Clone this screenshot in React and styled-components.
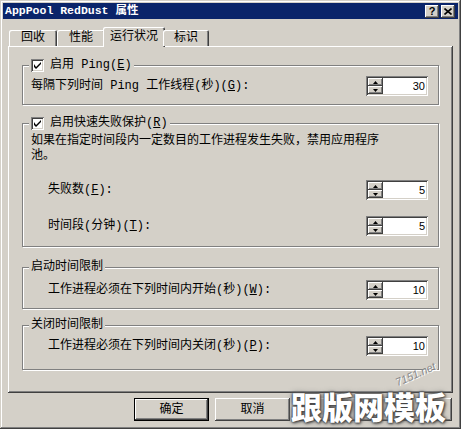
import styled, { createGlobalStyle } from "styled-components";

const GlobalStyle = createGlobalStyle`
  html, body { margin: 0; padding: 0; background: #d4d0c8; }
  body {
    font-family: "Liberation Mono", "Noto Sans CJK SC", monospace;
    font-size: 12px;
    line-height: 16px;
    color: #000;
  }
  * { box-sizing: border-box; }
`;

const raised = `
  box-shadow: inset -1px -1px #404040, inset 1px 1px #fff,
    inset -2px -2px #808080, inset 2px 2px #d4d0c8;
`;

const sunken = `
  box-shadow: inset 1px 1px #808080, inset -1px -1px #fff,
    inset 2px 2px #404040, inset -2px -2px #d4d0c8;
`;

const Window = styled.div`
  position: relative;
  width: 461px;
  height: 429px;
  padding: 3px;
  background: #d4d0c8;
  box-shadow: inset -1px -1px #404040, inset 1px 1px #d4d0c8,
    inset -2px -2px #808080, inset 2px 2px #fff;
  overflow: hidden;
`;

const TitleBar = styled.div`
  height: 16px;
  background: #0a246a;
  display: flex;
  align-items: center;
  justify-content: space-between;
  padding: 0 3px 0 2px;
`;

const Title = styled.span`
  color: #fff;
  font-weight: bold;
  font-size: 11.5px;
  white-space: pre;
`;

const CaptionButtons = styled.div`
  display: flex;
  gap: 2px;
`;

const CaptionButton = styled.div`
  width: 14px;
  height: 13px;
  background: #d4d0c8;
  ${raised}
  display: flex;
  align-items: center;
  justify-content: center;
  font-family: "Liberation Sans", sans-serif;
  font-weight: bold;
  font-size: 11px;
  line-height: 11px;
`;

const Body = styled.div`
  padding: 0 5px;
`;

const TabRow = styled.div`
  display: flex;
  align-items: flex-end;
  height: 19px;
  margin-top: 8px;
  padding-left: 1px;
  position: relative;
  z-index: 1;
`;

const Tab = styled.div`
  width: ${(p) => p.$w}px;
  height: ${(p) => (p.$active ? 20 : 16)}px;
  margin: ${(p) => (p.$active ? "0 -2px -1px" : "0")};
  background: #d4d0c8;
  border-radius: 2px 2px 0 0;
  box-shadow: inset 1px 1px #fff, inset -1px 0 #404040, inset -2px 0 #808080;
  display: flex;
  align-items: ${(p) => (p.$active ? "flex-start" : "center")};
  padding-top: ${(p) => (p.$active ? 2 : 0)}px;
  justify-content: center;
`;

const Panel = styled.div`
  width: 445px;
  height: 347px;
  padding: 11px 14px 0;
  ${raised}
  display: flex;
  flex-direction: column;
`;

const Group = styled.fieldset`
  margin: ${(p) => p.$mt}px 0 0;
  padding: 0 10px ${(p) => p.$pb}px 8px;
  border: 1px solid #808080;
  box-shadow: inset 1px 1px #fff, 1px 1px #fff;
  min-width: 0;
`;

const Legend = styled.legend`
  display: flex;
  align-items: center;
  gap: 6px;
  height: 16px;
  padding: 0 2px;
  margin-left: -2px;
  background: #d4d0c8;
  position: relative;
`;

const CheckBox = styled.span`
  width: 13px;
  height: 13px;
  background: #fff;
  ${sunken}
  display: flex;
  align-items: center;
  justify-content: center;
`;

const Row = styled.div`
  display: flex;
  align-items: center;
  justify-content: space-between;
  margin-top: ${(p) => p.$mt}px;
  padding-left: ${(p) => p.$indent}px;
  height: 20px;
`;

const Desc = styled.p`
  margin: 3px 0 0;
  width: 352px;
  line-height: 15px;
`;

const Spin = styled.div`
  width: 62px;
  height: 20px;
  padding: 2px;
  background: #fff;
  ${sunken}
  display: flex;
`;

const SpinButtons = styled.div`
  width: 15px;
  display: flex;
  flex-direction: column;
`;

const SpinButton = styled.div`
  flex: 1;
  background: #d4d0c8;
  ${raised}
  display: flex;
  align-items: center;
  justify-content: center;
`;

const SpinValue = styled.div`
  flex: 1;
  text-align: right;
  padding-right: 1px;
  font-family: "Liberation Sans", sans-serif;
  font-size: 11px;
  line-height: 16px;
`;

const ButtonRow = styled.div`
  display: flex;
  justify-content: flex-end;
  gap: 6px;
  margin-top: 5px;
  padding-right: 1px;
`;

const Button = styled.div`
  width: 75px;
  height: 23px;
  background: #d4d0c8;
  display: flex;
  align-items: center;
  justify-content: center;
  ${(p) =>
    p.$default
      ? `box-shadow: inset 0 0 0 1px #000, inset -2px -2px #404040, inset 2px 2px #fff, inset -3px -3px #808080;`
      : raised}
`;

const Watermark = styled.div`
  position: absolute;
  left: 291px;
  top: 389px;
  font-family: "Noto Sans CJK SC", sans-serif;
  font-weight: 900;
  font-size: 31px;
  line-height: 34px;
  color: #fff;
  text-shadow: 0 0 2px #333, 0 0 3px #555, 1px 1px 3px #444, 0 0 6px #888;
`;

const SiteMark = styled.div`
  position: absolute;
  left: 394px;
  top: 368px;
  transform: rotate(-24deg);
  font-family: "Liberation Sans", sans-serif;
  font-style: italic;
  font-size: 11px;
  line-height: 12px;
  color: #8a8a8a;
  text-shadow: 1px 1px 0 #fff;
`;

const Arrow = ({ up }) => (
  <svg width="5" height="3" viewBox="0 0 5 3">
    <path d={up ? "M2.5 0 L5 3 L0 3 Z" : "M0 0 L5 0 L2.5 3 Z"} fill="#000" />
  </svg>
);

const Check = () => (
  <svg width="7" height="7" viewBox="0 0 7 7">
    <path d="M0 2 L0 5 L2 7 L7 2 L7 0 L2 5 Z" fill="#000" />
  </svg>
);

const SpinBox = ({ value }) => (
  <Spin>
    <SpinButtons>
      <SpinButton>
        <Arrow up />
      </SpinButton>
      <SpinButton>
        <Arrow />
      </SpinButton>
    </SpinButtons>
    <SpinValue>{value}</SpinValue>
  </Spin>
);

const tabs = [
  { label: "回收", w: 48 },
  { label: "性能", w: 48 },
  { label: "运行状况", w: 62, active: true },
  { label: "标识", w: 46 },
];

export default function App() {
  return (
    <>
      <GlobalStyle />
      <Window>
        <TitleBar>
          <Title>AppPool RedDust 属性</Title>
          <CaptionButtons>
            <CaptionButton>?</CaptionButton>
            <CaptionButton>
              <svg width="8" height="7" viewBox="0 0 8 7">
                <path d="M0.5 0.5 L7.5 6.5 M7.5 0.5 L0.5 6.5" stroke="#000" strokeWidth="1.6" />
              </svg>
            </CaptionButton>
          </CaptionButtons>
        </TitleBar>
        <Body>
          <TabRow>
            {tabs.map((t) => (
              <Tab key={t.label} $w={t.w} $active={t.active}>
                {t.label}
              </Tab>
            ))}
          </TabRow>
          <Panel>
            <Group $mt={0} $pb={8}>
              <Legend>
                <CheckBox>
                  <Check />
                </CheckBox>
                <span>
                  启用 Ping(<u>E</u>)
                </span>
              </Legend>
              <Row $mt={3} $indent={0}>
                <span>
                  每隔下列时间 Ping 工作线程(秒)(<u>G</u>):
                </span>
                <SpinBox value="30" />
              </Row>
            </Group>
            <Group $mt={10} $pb={10}>
              <Legend>
                <CheckBox>
                  <Check />
                </CheckBox>
                <span>
                  启用快速失败保护(<u>R</u>)
                </span>
              </Legend>
              <Desc>如果在指定时间段内一定数目的工作进程发生失败，禁用应用程序池。</Desc>
              <Row $mt={16} $indent={17}>
                <span>
                  失败数(<u>F</u>):
                </span>
                <SpinBox value="5" />
              </Row>
              <Row $mt={16} $indent={17}>
                <span>
                  时间段(分钟)(<u>T</u>):
                </span>
                <SpinBox value="5" />
              </Row>
            </Group>
            <Group $mt={12} $pb={8}>
              <Legend>启动时间限制</Legend>
              <Row $mt={5} $indent={17}>
                <span>
                  工作进程必须在下列时间内开始(秒)(<u>W</u>):
                </span>
                <SpinBox value="10" />
              </Row>
            </Group>
            <Group $mt={8} $pb={13}>
              <Legend>关闭时间限制</Legend>
              <Row $mt={3} $indent={17}>
                <span>
                  工作进程必须在下列时间内关闭(秒)(<u>P</u>):
                </span>
                <SpinBox value="10" />
              </Row>
            </Group>
          </Panel>
          <ButtonRow>
            <Button $default>确定</Button>
            <Button>取消</Button>
            {/* 应用 / 帮助 buttons sit under the watermark */}
            <Button />
            <Button />
          </ButtonRow>
        </Body>
        <SiteMark>7151.net</SiteMark>
        <Watermark>跟版网模板</Watermark>
      </Window>
    </>
  );
}
